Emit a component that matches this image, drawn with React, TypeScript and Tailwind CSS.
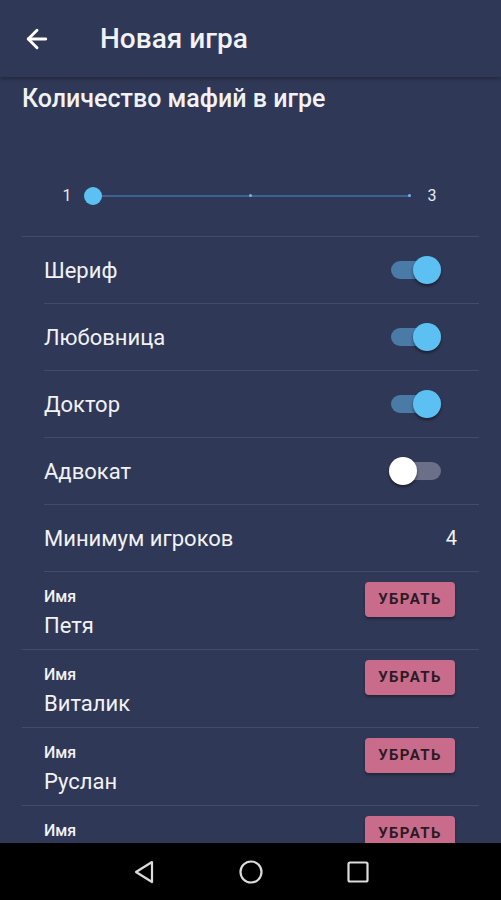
import { ArrowLeft } from 'lucide-react';

// Роли с переключателями
const ROLES = [
  { name: 'Шериф', on: true },
  { name: 'Любовница', on: true },
  { name: 'Доктор', on: true },
  { name: 'Адвокат', on: false },
];

// последний игрок уходит под панель навигации
const PLAYERS = ['Петя', 'Виталик', 'Руслан', ''];

const Toggle = ({ on }: { on: boolean }) => (
  <div className="relative w-[52px] h-[28px] flex items-center">
    <div
      className={`w-[50px] h-[18px] rounded-full ml-[1px] ${on ? 'bg-[#4a7aa6]' : 'bg-[#6b6f88]'}`}
    />
    <div
      className={`absolute top-0 w-[28px] h-[28px] rounded-full shadow-[0_2px_3px_rgba(0,0,0,0.45)] ${
        on ? 'left-[23px] bg-[#5cc1f2]' : 'left-[-1px] bg-white'
      }`}
    />
  </div>
);

const Slider = () => (
  <div className="flex items-center h-[82px] border-b border-[#434b6b] text-[#e8e8ee] text-[16px]">
    <span className="w-[20px] ml-[35px] text-center">1</span>
    <div className="relative w-[334px] h-[18px] ml-[7px]">
      <div className="absolute left-[8px] right-[8px] top-[8px] h-[2px] bg-[#3c6390]" />
      <div className="absolute left-[165px] top-[7.5px] w-[3px] h-[3px] rounded-full bg-[#6fb8e6]" />
      <div className="absolute right-[7px] top-[7.5px] w-[3px] h-[3px] rounded-full bg-[#6fb8e6]" />
      <div className="absolute left-0 top-0 w-[18px] h-[18px] rounded-full bg-[#5cc1f2]" />
    </div>
    <span className="w-[20px] ml-[4px] text-center">3</span>
  </div>
);

export default function App() {
  return (
    <div
      className="w-[501px] h-[900px] flex flex-col bg-[#303857] text-[#f2f2f5] overflow-hidden"
      style={{ fontFamily: 'Roboto, "Noto Sans", sans-serif' }}
    >
      {/* Шапка */}
      <header className="h-[77px] shrink-0 flex items-center bg-[#303857] shadow-[0_2px_4px_rgba(0,0,0,0.3)] relative z-10">
        <ArrowLeft className="w-[30px] h-[30px] ml-[22px] text-white" strokeWidth={2.3} />
        <h1 className="ml-[48px] text-[28px] font-medium">Новая игра</h1>
      </header>

      <main className="flex-1 overflow-hidden px-[22px]">
        <div className="h-[44px] flex items-center">
          <h2 className="text-[25px] font-medium">Количество мафий в игре</h2>
        </div>

        <div className="mt-[34px]">
          <Slider />
        </div>

        {ROLES.map((role) => (
          <div
            key={role.name}
            className="ml-[22px] h-[67px] flex items-center justify-between border-b border-[#434b6b] pr-[37px]"
          >
            <span className="text-[22px]">{role.name}</span>
            <Toggle on={role.on} />
          </div>
        ))}

        <div className="ml-[22px] h-[67px] flex items-center justify-between border-b border-[#434b6b] pr-[22px]">
          <span className="text-[22px]">Минимум игроков</span>
          <span className="text-[20px]">4</span>
        </div>

        {PLAYERS.map((name, i) => (
          <div
            key={i}
            className="h-[78px] flex justify-between border-b border-[#434b6b] pl-[22px] pr-[24px]"
          >
            <div className="pt-[15px]">
              <div className="text-[16px] font-medium leading-[20px]">Имя</div>
              <div className="text-[22px] leading-[28px] mt-[5px]">{name}</div>
            </div>
            <button className="mt-[10px] h-[35px] w-[90px] rounded-[4px] bg-[#c96c8b] text-[#2b1b24] text-[15px] font-bold tracking-[1.4px] shadow-[0_2px_3px_rgba(0,0,0,0.35)]">
              УБРАТЬ
            </button>
          </div>
        ))}
      </main>

      {/* Навигация Android */}
      <nav className="h-[57px] shrink-0 bg-black flex items-center justify-center gap-[83px]">
        <svg width="24" height="26" viewBox="0 0 24 26" fill="none" stroke="#dcdcdc" strokeWidth="2.2" strokeLinejoin="round">
          <path d="M20 3 L4 13 L20 23 Z" />
        </svg>
        <svg width="24" height="24" viewBox="0 0 24 24" fill="none" stroke="#dcdcdc" strokeWidth="2.2">
          <circle cx="12" cy="12" r="10.5" />
        </svg>
        <svg width="24" height="24" viewBox="0 0 24 24" fill="none" stroke="#dcdcdc" strokeWidth="2.2">
          <rect x="2.5" y="2.5" width="19" height="19" rx="1.5" />
        </svg>
      </nav>
    </div>
  );
}
